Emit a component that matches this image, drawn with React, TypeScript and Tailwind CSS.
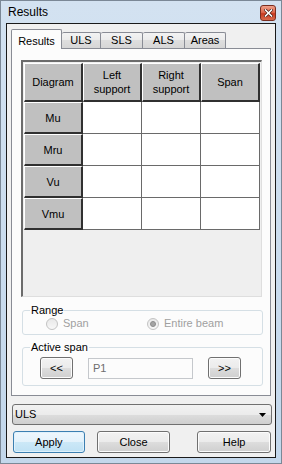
const tabs = [
  { label: 'Results', w: 'w-[51px]', active: true },
  { label: 'ULS', w: 'w-[39px]', active: false },
  { label: 'SLS', w: 'w-[42px]', active: false },
  { label: 'ALS', w: 'w-[42px]', active: false },
  { label: 'Areas', w: 'w-[41px]', active: false },
];

const rows = ['Mu', 'Mru', 'Vu', 'Vmu'];

const btn =
  'flex items-center justify-center h-[22px] rounded-[3px] border border-[#707070] bg-[linear-gradient(to_bottom,#f2f2f2_0%,#ebebeb_50%,#dddddd_50%,#cfcfcf_100%)] shadow-[inset_0_0_0_1px_#fcfcfc] text-black';

function HeadCell({ children }: { children: React.ReactNode }) {
  return (
    <div className="flex items-center justify-center text-center leading-[14px] bg-[#c0c0c0] border-t border-l border-t-white border-l-white border-r-2 border-b-2 border-r-[#303030] border-b-[#303030]">
      {children}
    </div>
  );
}

function Radio({ checked }: { checked?: boolean }) {
  return (
    <span className="flex items-center justify-center w-[12px] h-[12px] rounded-full border border-[#c3c3c3] bg-[linear-gradient(to_bottom,#e8e8e8,#f8f8f8)]">
      {checked && <span className="w-[6px] h-[6px] rounded-full bg-[#a4a4a4] border border-[#8c8c8c]" />}
    </span>
  );
}

export default function App() {
  return (
    <div className="w-[282px] h-[464px] flex flex-col border border-[#7b8896] bg-[linear-gradient(to_bottom,#d3e2f1,#c3d7eb)] font-['Liberation_Sans',Arial,sans-serif] text-[11px] text-black">
      {/* title bar */}
      <div className="h-[22px] flex items-start justify-between pl-[7px] pr-[5px] pt-[4px]">
        <span className="text-[12px] leading-[15px] text-black">Results</span>
        <span className="flex items-center justify-center w-[16px] h-[16px] rounded-[3px] border border-[#7a2d1f] bg-[linear-gradient(to_bottom,#eea08a_0%,#e06a4f_45%,#c8391f_55%,#d96a4c_100%)]">
          <svg width="9" height="8" viewBox="0 0 9 8">
            <path d="M1.5 1 L7.5 7 M7.5 1 L1.5 7" stroke="#4a1a12" strokeWidth="3" strokeLinecap="square" />
            <path d="M1.5 1 L7.5 7 M7.5 1 L1.5 7" stroke="#ffffff" strokeWidth="1.6" strokeLinecap="square" />
          </svg>
        </span>
      </div>

      {/* client area */}
      <div className="flex-1 mx-[5px] mb-[5px] border border-[#1a1a1a] bg-[#f0f0f0] flex flex-col px-[4px] pt-[5px]">
        {/* tabs */}
        <div className="relative z-10 flex items-end h-[20px]">
          {tabs.map((t) =>
            t.active ? (
              <div
                key={t.label}
                className={`${t.w} h-[20px] flex items-start justify-center pt-[3px] border border-b-0 border-[#898c95] rounded-t-[2px] bg-[#fcfcfc]`}
              >
                {t.label}
              </div>
            ) : (
              <div
                key={t.label}
                className={`${t.w} h-[16px] mb-px flex items-center justify-center border border-b-0 border-l-0 border-[#898c95] rounded-t-[2px] bg-[linear-gradient(to_bottom,#f3f3f3_0%,#ebebeb_50%,#dedede_50%,#d6d6d6_100%)]`}
              >
                {t.label}
              </div>
            )
          )}
        </div>

        {/* tab page */}
        <div className="-mt-px h-[348px] border border-[#898c95] bg-[#fcfcfc] flex flex-col pt-[11px] pl-[9px]">
          <div className="w-[241px] h-[237px] border-l-2 border-t-2 border-l-[#6b6b6b] border-t-[#6b6b6b] border-r border-b border-r-[#dedede] border-b-[#dedede] bg-[#efefef]">
            <div className="grid grid-cols-[59px_59px_59px_59px] grid-rows-[39px_32px_32px_32px_32px] pl-px pt-px">
              <HeadCell>Diagram</HeadCell>
              <HeadCell>
                Left
                <br />
                support
              </HeadCell>
              <HeadCell>
                Right
                <br />
                support
              </HeadCell>
              <HeadCell>Span</HeadCell>
              {rows.map((r) => (
                <div key={r} className="contents">
                  <HeadCell>{r}</HeadCell>
                  <div className="bg-white border-r border-b border-[#6a6a6a]" />
                  <div className="bg-white border-r border-b border-[#6a6a6a]" />
                  <div className="bg-white border-r border-b border-[#6a6a6a]" />
                </div>
              ))}
            </div>
          </div>

          {/* Range */}
          <fieldset className="mt-[6px] ml-px w-[241px] border border-[#d5dfe5] rounded-[3px] pl-[7px] pb-[4px]">
            <legend className="px-px leading-[14px]">Range</legend>
            <div className="flex items-center h-[13px] ml-[16px] text-[#a0a0a0]">
              <div className="flex items-center gap-[5px] w-[101px]">
                <Radio />
                <span>Span</span>
              </div>
              <div className="flex items-center gap-[5px]">
                <Radio checked />
                <span>Entire beam</span>
              </div>
            </div>
          </fieldset>

          {/* Active span */}
          <fieldset className="mt-[5px] ml-px w-[241px] border border-[#d5dfe5] rounded-[3px] pl-[7px] pb-[6px]">
            <legend className="px-px leading-[14px]">Active span</legend>
            <div className="flex items-center mt-[3px] ml-[10px]">
              <div className={`${btn} w-[33px] h-[21px]`}>&lt;&lt;</div>
              <div className="ml-[15px] w-[105px] h-[21px] border border-[#c5c8cc] bg-[#fcfcfc] flex items-center pl-[4px] text-[#6d6d6d]">
                P1
              </div>
              <div className={`${btn} ml-[15px] w-[33px] h-[21px]`}>&gt;&gt;</div>
            </div>
          </fieldset>
        </div>

        {/* combo */}
        <div className="mt-[8px] ml-px w-[260px] h-[21px] flex items-center justify-between rounded-[3px] border border-[#707070] bg-[linear-gradient(to_bottom,#f2f2f2_0%,#ebebeb_50%,#dddddd_50%,#cfcfcf_100%)] pl-[2px] pr-[5px]">
          <span>ULS</span>
          <svg width="7" height="4" viewBox="0 0 7 4">
            <path d="M0 0 H7 L3.5 4 Z" fill="#000" />
          </svg>
        </div>

        {/* buttons */}
        <div className="mt-[6px] flex">
          <div className="ml-[2px] w-[72px] h-[22px] flex items-center justify-center rounded-[3px] border border-[#3c7fb1] bg-[linear-gradient(to_bottom,#eef7fd_0%,#e3f2fb_50%,#cce8f7_50%,#bfe1f4_100%)] shadow-[inset_0_0_0_1px_#dff1fc]">
            Apply
          </div>
          <div className={`${btn} ml-[12px] w-[74px]`}>Close</div>
          <div className={`${btn} ml-[27px] w-[74px]`}>Help</div>
        </div>
      </div>
    </div>
  );
}
